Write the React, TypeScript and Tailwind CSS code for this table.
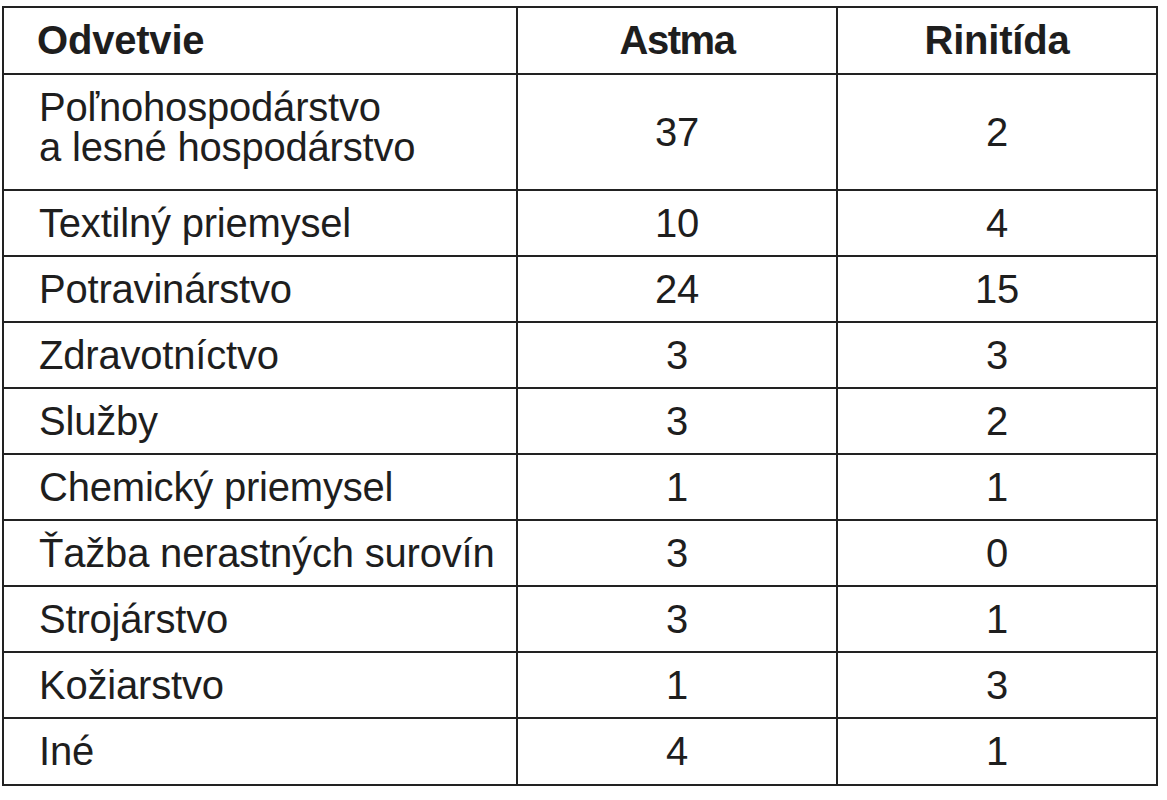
import React from 'react'

type Row = {
  odvetvie: string[]
  astma: string
  rinitida: string
}

const rows: Row[] = [
  {odvetvie: ['Poľnohospodárstvo', 'a lesné hospodárstvo'], astma: '37', rinitida: '2'},
  {odvetvie: ['Textilný priemysel'], astma: '10', rinitida: '4'},
  {odvetvie: ['Potravinárstvo'], astma: '24', rinitida: '15'},
  {odvetvie: ['Zdravotníctvo'], astma: '3', rinitida: '3'},
  {odvetvie: ['Služby'], astma: '3', rinitida: '2'},
  {odvetvie: ['Chemický priemysel'], astma: '1', rinitida: '1'},
  {odvetvie: ['Ťažba nerastných surovín'], astma: '3', rinitida: '0'},
  {odvetvie: ['Strojárstvo'], astma: '3', rinitida: '1'},
  {odvetvie: ['Kožiarstvo'], astma: '1', rinitida: '3'},
  {odvetvie: ['Iné'], astma: '4', rinitida: '1'}
]

export default function App(): JSX.Element {
  return (
    <div className="min-h-[800px] w-[1167px] bg-white pt-[6px] pl-[2px] font-['Liberation_Sans',Arial,sans-serif] text-[40px] leading-[40px] tracking-[-0.2px] text-[#1e1e1e]">
      <table className="table-fixed border-collapse">
        <colgroup>
          <col className="w-[514px]" />
          <col className="w-[320px]" />
          <col className="w-[320px]" />
        </colgroup>
        <thead>
          <tr className="h-[67px]">
            <th className="border-2 border-[#222] pl-[33px] pt-[12px] text-left align-top font-bold">Odvetvie</th>
            <th className="border-2 border-[#222] pt-[12px] text-center align-top font-bold tracking-[-1.5px]">Astma</th>
            <th className="border-2 border-[#222] pt-[12px] text-center align-top font-bold">Rinitída</th>
          </tr>
        </thead>
        <tbody>
          {rows.map((r, i) => {
            const tall = r.odvetvie.length > 1
            return (
              <tr key={i} className={tall ? 'h-[116px]' : i === rows.length - 1 ? 'h-[67px]' : 'h-[66px]'}>
                <td className="border-2 border-[#222] pl-[35px] pt-[12px] align-top">
                  {r.odvetvie.map((line) => (
                    <div key={line}>{line}</div>
                  ))}
                </td>
                <td className={`border-2 border-[#222] text-center ${tall ? 'align-middle' : 'pt-[12px] align-top'}`}>
                  {r.astma}
                </td>
                <td className={`border-2 border-[#222] text-center ${tall ? 'align-middle' : 'pt-[12px] align-top'}`}>
                  {r.rinitida}
                </td>
              </tr>
            )
          })}
        </tbody>
      </table>
    </div>
  )
}
